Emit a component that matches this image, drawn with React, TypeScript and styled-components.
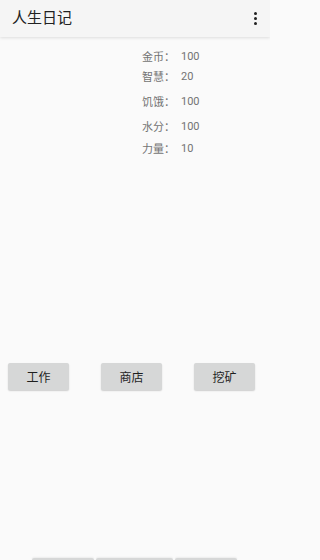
import styled, { createGlobalStyle } from 'styled-components';

const GlobalStyle = createGlobalStyle`
  html, body {
    margin: 0;
    padding: 0;
    background: #fafafa;
  }
  body {
    font-family: Roboto, "Noto Sans CJK SC", sans-serif;
  }
`;

const Screen = styled.div`
  width: 270px;
  height: 560px;
  overflow: hidden;
  background: #fafafa;
  display: flex;
  flex-direction: column;
`;

const AppBar = styled.header`
  height: 37px;
  flex-shrink: 0;
  background: #f5f5f5;
  display: flex;
  align-items: center;
  justify-content: space-between;
  padding: 0 11px 0 12px;
  box-shadow: 0 1px 3px rgba(0, 0, 0, 0.12);
  position: relative;
  z-index: 1;
`;

const Title = styled.h1`
  margin: 0;
  font-size: 15px;
  font-weight: 400;
  color: #212121;
  line-height: 1;
`;

const MenuDots = styled.div`
  display: flex;
  flex-direction: column;
  gap: 2px;
  padding: 0 2px;

  span {
    width: 3px;
    height: 3px;
    background: #212121;
    border-radius: 50%;
  }
`;

const StatList = styled.div`
  display: flex;
  flex-direction: column;
  padding: 12px 0 0 142px;
`;

const StatRow = styled.div<{ $gap: number }>`
  display: flex;
  align-items: center;
  height: 14px;
  margin-bottom: ${(p) => p.$gap}px;
  color: #737373;
`;

const StatLabel = styled.span`
  width: 39px;
  font-family: "Noto Sans CJK SC", sans-serif;
  font-size: 11px;
`;

const StatValue = styled.span`
  font-family: Roboto, sans-serif;
  font-size: 11px;
`;

const ActionBar = styled.div`
  display: flex;
  justify-content: space-between;
  padding: 0 15px 0 8px;
  margin-top: auto;
`;

const ActionButton = styled.button`
  width: 61px;
  height: 27px;
  border: none;
  border-radius: 2px;
  background: #d6d7d7;
  color: #1f1f1f;
  font-family: "Noto Sans CJK SC", sans-serif;
  font-size: 12px;
  padding: 0;
  box-shadow: 0 1px 1.5px rgba(0, 0, 0, 0.18);
`;

const Spacer = styled.div`
  height: 168px;
  flex-shrink: 0;
`;

const BottomBar = styled.div`
  display: flex;
  gap: 2px;
  padding-left: 32px;
  flex-shrink: 0;
  height: 2px;
`;

const BottomButton = styled.div<{ $w: number }>`
  width: ${(p) => p.$w}px;
  height: 20px;
  background: #d6d7d7;
  border-radius: 2px;
  box-shadow: 0 -1px 2px rgba(0, 0, 0, 0.06);
`;

const stats = [
  { label: '金币：', value: '100', gap: 6 },
  { label: '智慧：', value: '20', gap: 11 },
  { label: '饥饿：', value: '100', gap: 11 },
  { label: '水分：', value: '100', gap: 8 },
  { label: '力量：', value: '10', gap: 0 },
];

export default function App() {
  return (
    <Screen>
      <GlobalStyle />
      <AppBar>
        <Title>人生日记</Title>
        <MenuDots>
          <span />
          <span />
          <span />
        </MenuDots>
      </AppBar>
      <StatList>
        {stats.map((s) => (
          <StatRow key={s.label} $gap={s.gap}>
            <StatLabel>{s.label}</StatLabel>
            <StatValue>{s.value}</StatValue>
          </StatRow>
        ))}
      </StatList>
      <ActionBar>
        <ActionButton>工作</ActionButton>
        <ActionButton>商店</ActionButton>
        <ActionButton>挖矿</ActionButton>
      </ActionBar>
      <Spacer />
      <BottomBar>
        <BottomButton $w={62} />
        <BottomButton $w={77} />
        <BottomButton $w={62} />
      </BottomBar>
    </Screen>
  );
}
